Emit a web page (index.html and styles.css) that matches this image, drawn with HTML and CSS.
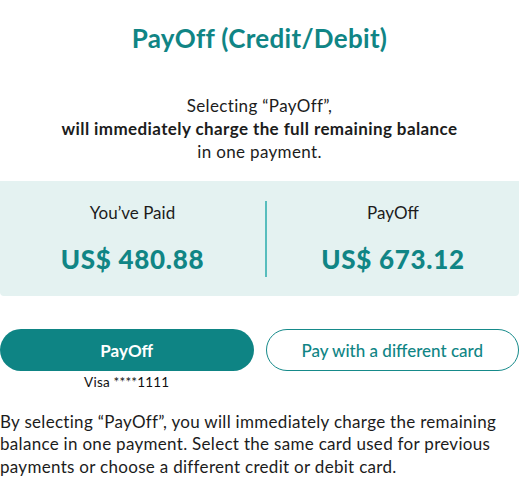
FILE: index.html
```html
<!DOCTYPE html>
<html lang="en">
<head>
<meta charset="utf-8">
<title>PayOff (Credit/Debit)</title>
<link rel="stylesheet" href="styles.css">
</head>
<body>
<main class="page">
  <h1 class="title">PayOff (Credit/Debit)</h1>
  <p class="intro">Selecting “PayOff”,<br><strong>will immediately charge the full remaining balance</strong><br>in one payment.</p>
  <section class="summary">
    <div class="summary-col summary-col--left">
      <div class="summary-label">You’ve Paid</div>
      <div class="summary-amount">US$ 480.88</div>
    </div>
    <div class="summary-divider"></div>
    <div class="summary-col">
      <div class="summary-label">PayOff</div>
      <div class="summary-amount">US$ 673.12</div>
    </div>
  </section>
  <div class="actions">
    <div class="action">
      <button class="btn btn--primary" type="button">PayOff</button>
      <div class="card-note">Visa ****1111</div>
    </div>
    <div class="action">
      <button class="btn btn--outline" type="button">Pay with a different card</button>
    </div>
  </div>
  <p class="note">By selecting “PayOff”, you will immediately charge the remaining balance in one payment. Select the same card used for previous payments or choose a different credit or debit card.</p>
</main>
</body>
</html>
```

FILE: styles.css
```css
html, body {
  margin: 0;
  padding: 0;
  background: #ffffff;
}

body {
  font-family: Lato, "Noto Sans", sans-serif;
  color: #1c1c1c;
}

.page {
  width: 519px;
}

.title {
  margin: 0;
  padding-top: 23px;
  font-size: 26px;
  line-height: 31px;
  font-weight: 700;
  letter-spacing: 0.3px;
  color: #108585;
  text-align: center;
}

.intro {
  margin: 40px 0 0;
  font-size: 17px;
  line-height: 23px;
  letter-spacing: 0.35px;
  text-align: center;
}

.intro strong {
  font-weight: 700;
  letter-spacing: 0.4px;
}

.summary {
  margin-top: 18px;
  display: grid;
  grid-template-columns: 265px 2px 1fr;
  padding: 20px 0 19px;
  background: #e4f2f1;
  border-radius: 0 0 4px 4px;
}

.summary-col {
  display: flex;
  flex-direction: column;
  align-items: center;
  height: 76px;
}

.summary-divider {
  background: #57bdbd;
  height: 76px;
}

.summary-label {
  font-size: 17px;
  line-height: 23px;
}

.summary-amount {
  margin-top: 20px;
  font-size: 26px;
  line-height: 31px;
  font-weight: 900;
  letter-spacing: 0.7px;
  color: #108585;
}

.actions {
  margin-top: 33px;
  display: flex;
  gap: 12px;
}

.action {
  flex: 1;
  display: flex;
  flex-direction: column;
  align-items: center;
}

.btn {
  width: 100%;
  height: 42px;
  border-radius: 21px;
  font-family: inherit;
  font-size: 17px;
  cursor: pointer;
}

.btn--primary {
  background: #0e8484;
  color: #ffffff;
  border: none;
  font-weight: 700;
}

.btn--outline {
  background: #ffffff;
  color: #108585;
  border: 1.5px solid #168a8a;
  font-weight: 500;
}

.card-note {
  margin-top: 3px;
  font-size: 13.5px;
  line-height: 16px;
  letter-spacing: 0.2px;
  color: #111111;
}

.note {
  margin: 21px 0 0;
  font-size: 17px;
  line-height: 22.4px;
  letter-spacing: 0.3px;
}
```
